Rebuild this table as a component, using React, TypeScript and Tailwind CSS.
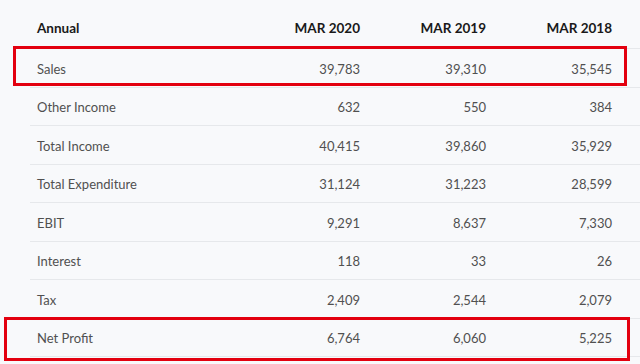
const rows: [string, string, string, string][] = [
  ['Sales', '39,783', '39,310', '35,545'],
  ['Other Income', '632', '550', '384'],
  ['Total Income', '40,415', '39,860', '35,929'],
  ['Total Expenditure', '31,124', '31,223', '28,599'],
  ['EBIT', '9,291', '8,637', '7,330'],
  ['Interest', '118', '33', '26'],
  ['Tax', '2,409', '2,544', '2,079'],
  ['Net Profit', '6,764', '6,060', '5,225'],
];

export default function App() {
  return (
    <div
      className="relative h-[364px] w-[640px] overflow-hidden bg-[#f8f9fb] text-[13px]"
      style={{ fontFamily: 'Lato, "Open Sans", sans-serif' }}
    >
      <div className="ml-[30px] w-[610px]">
        <div className="grid h-[49px] grid-cols-[232px_126px_126px_126px] items-center border-b border-[#e6e8eb] pt-[9px] text-[13.5px] font-bold text-[#1a1a1a]">
          <div className="pl-[7px]">Annual</div>
          <div className="pr-[28px] text-right">MAR 2020</div>
          <div className="pr-[28px] text-right">MAR 2019</div>
          <div className="pr-[28px] text-right">MAR 2018</div>
        </div>
        {rows.map(([label, a, b, c]) => (
          <div
            key={label}
            className="grid h-[38.5px] grid-cols-[232px_126px_126px_126px] items-center border-b border-[#e6e8eb] pt-[3px] text-[#505050]"
          >
            <div className="pl-[7px]">{label}</div>
            <div className="pr-[28px] text-right">{a}</div>
            <div className="pr-[28px] text-right">{b}</div>
            <div className="pr-[28px] text-right">{c}</div>
          </div>
        ))}
      </div>

      {/* highlight boxes */}
      <div className="absolute left-[13px] top-[46px] h-[40px] w-[614px] border-[3px] border-[#e3000f]" />
      <div className="absolute left-[4px] top-[317px] h-[44px] w-[626px] border-[3px] border-[#e3000f]" />
    </div>
  );
}
